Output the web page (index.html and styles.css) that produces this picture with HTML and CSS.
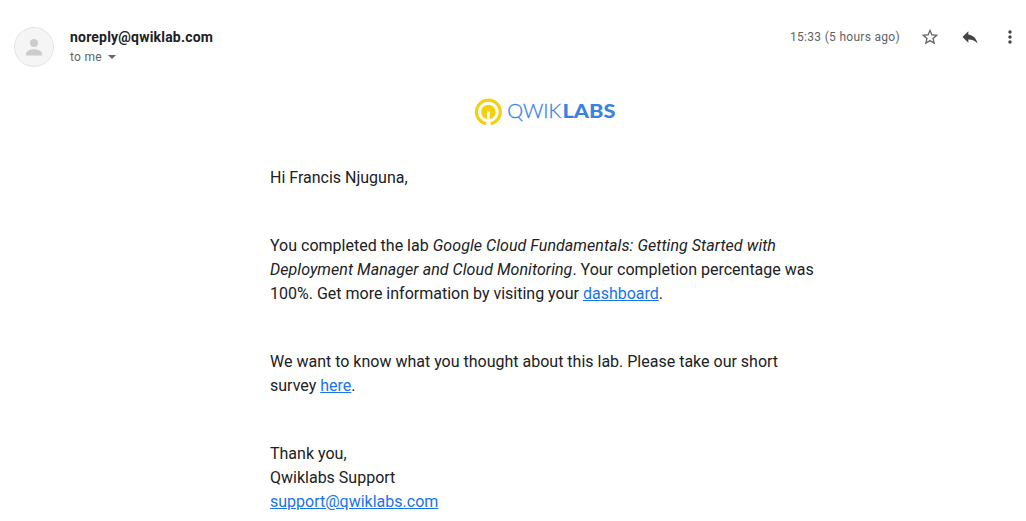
FILE: index.html
```html
<!DOCTYPE html>
<html lang="en">
<head>
<meta charset="utf-8">
<title>Qwiklabs</title>
<link rel="stylesheet" href="styles.css">
</head>
<body>
<header class="header">
  <svg class="avatar" viewBox="0 0 40 40"><circle class="avatar-bg" cx="20" cy="20" r="19.5"/><circle class="avatar-person" cx="20" cy="16" r="4"/><path class="avatar-person" d="M12 28.5v-2c0-2.700 5.300-4.200 8-4.200s8 1.500 8 4.200v2z"/></svg>
  <div class="sender">
    <div class="sender-name">noreply@qwiklab.com</div>
    <div class="recipient"><span>to me</span><svg class="caret" viewBox="0 0 8 4"><path d="M0 0h8L4 4z"/></svg></div>
  </div>
  <div class="date">15:33 (5 hours ago)</div>
  <svg class="icon star" viewBox="0 0 24 24"><path d="M22 9.240l-7.190-.62L12 2 9.190 8.630 2 9.240l5.460 4.730L5.820 21 12 17.270 18.180 21l-1.630-7.030L22 9.240zM12 15.400l-3.760 2.270 1-4.280-3.320-2.880 4.380-.38L12 6.100l1.710 4.040 4.380.38-3.320 2.880 1 4.280L12 15.400z"/></svg>
  <svg class="icon reply" viewBox="0 0 24 24"><path d="M10 9V5l-7 7 7 7v-4.100c5 0 8.500 1.600 11 5.100-1-5-4-10-11-11z"/></svg>
  <svg class="icon more" viewBox="0 0 24 24"><path d="M12 8c1.100 0 2-.9 2-2s-.9-2-2-2-2 .9-2 2 .9 2 2 2zm0 2c-1.100 0-2 .9-2 2s.9 2 2 2 2-.9 2-2-.9-2-2-2zm0 6c-1.100 0-2 .9-2 2s.9 2 2 2 2-.9 2-2-.9-2-2-2z"/></svg>
</header>
<main class="message">
  <svg class="logo" viewBox="0 0 142 30">
    <path class="logo-ring" d="M12.200 25.700A11.900 11.900 0 1 1 16.600 25.700"/>
    <circle class="logo-disc" cx="14.400" cy="14" r="7.300"/>
    <path class="logo-notch" d="M14.400 22v-8.500"/>
    <text class="logo-light" x="33.200" y="20" textLength="54" lengthAdjust="spacingAndGlyphs">QWIK</text>
    <text class="logo-bold" x="88.500" y="20" textLength="53" lengthAdjust="spacingAndGlyphs">LABS</text>
  </svg>
  <p>Hi Francis Njuguna,</p>
  <p>You completed the lab <i>Google Cloud Fundamentals: Getting Started with Deployment Manager and Cloud Monitoring</i>. Your completion percentage was 100%. Get more information by visiting your <a href="#">dashboard</a>.</p>
  <p>We want to know what you thought about this lab. Please take our short survey <a href="#">here</a>.</p>
  <p>Thank you,<br>Qwiklabs Support<br><a href="#">support@qwiklabs.com</a></p>
</main>
</body>
</html>
```
FILE: styles.css
```css
body {
  margin: 0;
  background: #fff;
  color: #202124;
  font-family: Roboto, sans-serif;
}
.header {
  display: flex;
  align-items: flex-start;
  height: 70px;
  padding: 27px 6px 0 14px;
  box-sizing: border-box;
}
.avatar { width: 40px; height: 40px; }
.avatar-bg { fill: #f5f5f5; stroke: #e4e4e4; }
.avatar-person { fill: #ccc; }
.sender { margin-left: 16px; }
.sender-name {
  font-size: 14px;
  font-weight: 700;
  line-height: 20px;
  letter-spacing: 0.2px;
}
.recipient {
  display: flex;
  align-items: center;
  gap: 6px;
  color: #5f6368;
  font-size: 12px;
  line-height: 20px;
  letter-spacing: 0.3px;
}
.caret { width: 8px; height: 4px; fill: #666; }
.date {
  margin-left: auto;
  color: #5f6368;
  font-size: 12px;
  line-height: 20px;
  letter-spacing: 0.3px;
}
.icon { width: 20px; height: 20px; margin-left: 20px; fill: #444; }
.star { fill: #666; }
.message {
  width: 550px;
  margin-left: 270px;
  padding-top: 28px;
  font-size: 16px;
  line-height: 24px;
}
.logo {
  display: block;
  width: 142px;
  height: 30px;
  margin: 0 0 38px 204px;
}
.logo-ring { fill: none; stroke: #f4d110; stroke-width: 3.2; }
.logo-disc { fill: #f4d110; }
.logo-notch { stroke: #fff; stroke-width: 2.6; }
.logo-light, .logo-bold { font-family: Lato, sans-serif; fill: #3b82e0; font-size: 19.5px; }
.logo-light { font-weight: 300; stroke: #3b82e0; stroke-width: 0.3; }
.logo-bold { font-weight: 900; }
.message p { margin: 0 0 44px; }
.message p:last-child { margin-bottom: 0; }
.message i { letter-spacing: 0.06px; }
.message a { color: #1a73e8; }
```
